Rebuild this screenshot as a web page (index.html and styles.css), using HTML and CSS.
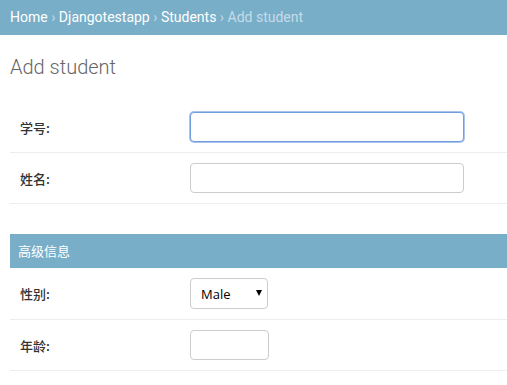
FILE: index.html
```html
<!DOCTYPE html>
<html lang="zh-CN">
<head>
    <meta charset="UTF-8">
    <title>Add student | Django site admin</title>
    <link rel="stylesheet" href="styles.css">
</head>
<body>
    <div class="breadcrumbs">
        <a href="#">Home</a> &rsaquo; <a href="#">Djangotestapp</a> &rsaquo; <a href="#">Students</a> &rsaquo; Add student
    </div>

    <div id="content">
        <h1>Add student</h1>

        <form>
            <fieldset class="module aligned">
                <div class="form-row">
                    <label class="required" for="id_sno">学号:</label>
                    <input type="text" id="id_sno" class="vTextField focused">
                </div>
                <div class="form-row">
                    <label class="required" for="id_name">姓名:</label>
                    <input type="text" id="id_name" class="vTextField">
                </div>
            </fieldset>

            <fieldset class="module aligned">
                <h2>高级信息</h2>
                <div class="form-row">
                    <label class="required" for="id_sex">性别:</label>
                    <span class="select-wrap">
                        <select id="id_sex">
                            <option>Male</option>
                            <option>Female</option>
                        </select>
                        <span class="arrow"></span>
                    </span>
                </div>
                <div class="form-row">
                    <label class="required" for="id_age">年龄:</label>
                    <input type="text" id="id_age" class="vIntegerField">
                </div>
            </fieldset>
        </form>
    </div>
</body>
</html>
```

FILE: styles.css
```css
body {
    margin: 0;
    padding: 0;
    font-family: Roboto, "Noto Sans CJK SC", sans-serif;
    font-size: 14px;
    color: #333;
    background: #fff;
}
a {
    color: #fff;
    text-decoration: none;
}
.breadcrumbs {
    background: #79aec8;
    padding: 10px;
    height: 15px;
    line-height: 15px;
    font-size: 14px;
    color: #c4dce8;
}
#content {
    padding: 20px 0 0 10px;
}
h1 {
    margin: 0 0 23px;
    font-size: 20px;
    font-weight: 300;
    line-height: 24px;
    color: #666;
}
fieldset {
    margin: 0 0 30px;
    padding: 0;
    border: none;
}
.module h2 {
    margin: 0;
    padding: 8px;
    height: 18px;
    line-height: 18px;
    font-size: 13px;
    font-weight: normal;
    font-family: "Noto Sans CJK SC", sans-serif;
    color: #fff;
    background: #79aec8;
}
.form-row {
    display: flex;
    align-items: center;
    padding: 10px;
    border-bottom: 1px solid #eee;
}
.form-row label {
    width: 160px;
    padding-right: 10px;
    font-family: "Noto Sans CJK SC", sans-serif;
    font-size: 13px;
    line-height: 1;
    color: #333;
}
.required {
    font-weight: 500;
}
input, select {
    box-sizing: border-box;
    height: 30px;
    margin: 0;
    padding: 5px 6px;
    border: 1px solid #ccc;
    border-radius: 4px;
    background: #fff;
    font-family: "Open Sans", sans-serif;
    font-size: 13px;
    color: #333;
}
.vTextField {
    width: 274px;
}
.vIntegerField {
    width: 79px;
}
input.focused {
    border-color: #6f9de0;
    box-shadow: 0 0 0 1px #a9c4ef;
}
.select-wrap {
    position: relative;
    display: inline-block;
    height: 31px;
}
select {
    width: 78px;
    height: 31px;
    padding: 5px 10px;
    -webkit-appearance: none;
    appearance: none;
    color: #000;
}
.arrow {
    position: absolute;
    right: 6px;
    top: 12px;
    width: 0;
    height: 0;
    border-left: 3.5px solid transparent;
    border-right: 3.5px solid transparent;
    border-top: 6px solid #000;
    pointer-events: none;
}
```
